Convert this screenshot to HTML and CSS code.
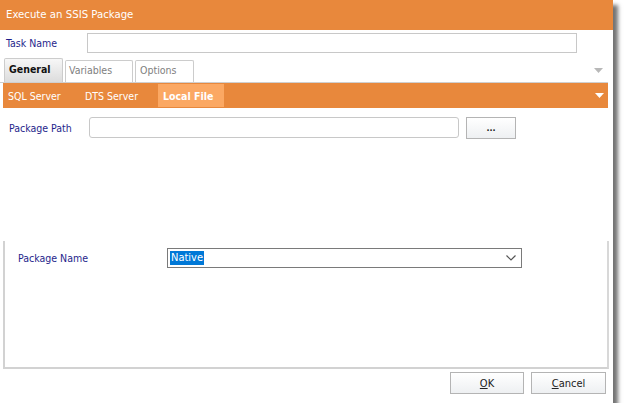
FILE: index.html
```html
<!DOCTYPE html>
<html lang="en-US">
<head>
	<title>Execute an SSIS Package</title>
	<meta charset="UTF-8">
	<link rel="stylesheet" href="styles.css">
</head>
<body>

<div class="window">
	<div class="titlebar">Execute an SSIS Package</div>

	<div class="taskrow">
		<label class="label tasklabel">Task Name</label>
		<div class="textbox taskbox"></div>
	</div>

	<div class="tabs">
		<div class="tab active">General</div>
		<div class="tab">Variables</div>
		<div class="tab">Options</div>
		<svg class="tabarrow" width="9" height="6" viewBox="0 0 9 6"><polygon points="0,0 9,0 4.5,5" fill="#b8b8b8"/></svg>
	</div>

	<div class="subbar">
		<div class="subitem sql">SQL Server</div>
		<div class="subitem dts">DTS Server</div>
		<div class="subitem current">Local File</div>
		<svg class="subarrow" width="9" height="6" viewBox="0 0 9 6"><polygon points="0,0 9,0 4.5,5" fill="#ffffff"/></svg>
	</div>

	<div class="pathrow">
		<label class="label pathlabel">Package Path</label>
		<div class="textbox pathbox"></div>
		<div class="button browse">...</div>
	</div>

	<div class="spacer"></div>

	<div class="panel">
		<div class="namerow">
			<label class="label namelabel">Package Name</label>
			<div class="combo">
				<span class="selected">Native</span>
				<svg class="chevron" width="10" height="6" viewBox="0 0 10 6"><polyline points="0.5,0.5 5,5 9.5,0.5" fill="none" stroke="#555" stroke-width="1.2"/></svg>
			</div>
		</div>
	</div>

	<div class="footer">
		<div class="button dlg"><u>O</u>K</div>
		<div class="button dlg"><u>C</u>ancel</div>
	</div>
</div>

</body>
</html>
```

FILE: styles.css
```css
body {
	margin: 0;
	background: white;
	font-family: "DejaVu Sans Condensed", "DejaVu Sans", sans-serif;
	font-size: 10.5px;
}

.window {
	width: 613px;
	height: 403px;
	background: white;
	box-shadow: 5px 5px 4px rgba(0, 0, 0, 0.55);
	display: flex;
	flex-direction: column;
}

.titlebar {
	height: 30px;
	flex: none;
	background: #e8883c;
	color: white;
	font-size: 11.3px;
	display: flex;
	align-items: center;
	padding-left: 6px;
	padding-bottom: 1px;
	box-sizing: border-box;
}

.label { color: #1f1f8c; }

.textbox {
	border: 1px solid #c8c8c8;
	background: white;
	box-sizing: border-box;
}

.taskrow {
	display: flex;
	align-items: center;
	height: 20px;
	margin-top: 3px;
	flex: none;
}
.tasklabel { width: 87px; padding-left: 6px; box-sizing: border-box; }
.taskbox { width: 490px; height: 20px; }

.tabs {
	display: flex;
	align-items: flex-end;
	height: 25px;
	margin-top: 5px;
	width: 608px;
	box-sizing: border-box;
	border-bottom: 1px solid #cfcfcf;
	padding-left: 4px;
	gap: 2px;
	flex: none;
	position: relative;
}
.tab {
	height: 22px;
	border: 1px solid #cccccc;
	border-bottom: none;
	border-radius: 2px 2px 0 0;
	background: white;
	color: #808080;
	box-sizing: border-box;
	padding-left: 3px;
	padding-top: 3px;
}
.tab:nth-child(2) { width: 68px; }
.tab:nth-child(3) { width: 59px; padding-left: 4px; }
.tab.active {
	height: 24px;
	width: 59px;
	background: linear-gradient(#f7f7f7, #dcdcdc);
	color: #111;
	font-weight: bold;
	padding-left: 4px;
	padding-top: 4px;
}
.tabarrow { position: absolute; right: 5px; top: 10px; }

.subbar {
	height: 25px;
	width: 605px;
	margin-left: 3px;
	background: #e8883c;
	display: flex;
	align-items: stretch;
	color: white;
	flex: none;
	position: relative;
}
.subitem { display: flex; align-items: center; padding-top: 1px; box-sizing: border-box; }
.sql { padding-left: 5px; width: 82px; }
.dts { width: 73px; }
.current {
	width: 66px;
	background: #fba863;
	font-weight: bold;
	padding-left: 5px;
	margin: 1px 0 1px;
}
.subarrow { position: absolute; right: 4px; top: 10px; }

.pathrow {
	display: flex;
	align-items: center;
	margin-top: 9px;
	height: 22px;
	flex: none;
}
.pathlabel { width: 89px; padding-left: 9px; box-sizing: border-box; }
.pathbox { width: 370px; height: 21px; border-radius: 3px; margin-top: -1px; }

.button {
	border: 1px solid #b4b4b4;
	background: linear-gradient(#ffffff, #eef0f2);
	color: #222;
	box-sizing: border-box;
	display: flex;
	align-items: center;
	justify-content: center;
}
.browse { width: 50px; height: 22px; margin-left: 7px; font-weight: bold; font-size: 9px; }

.spacer { height: 102px; flex: none; }

.panel {
	width: 606px;
	height: 128px;
	margin-left: 3px;
	border-left: 2px solid #d2d2d2;
	border-right: 2px solid #d8d8d8;
	border-bottom: 2px solid #d2d2d2;
	box-sizing: border-box;
	flex: none;
}
.namerow {
	display: flex;
	align-items: center;
	margin-top: 7px;
	height: 20px;
}
.namelabel { width: 162px; padding-left: 13px; box-sizing: border-box; }
.combo {
	width: 355px;
	height: 20px;
	border: 1px solid #7a7a7a;
	box-sizing: border-box;
	display: flex;
	align-items: center;
	justify-content: space-between;
	padding-left: 2px;
	padding-right: 5px;
}
.selected {
	background: #0078d7;
	color: white;
	font-size: 11px;
	line-height: 14px;
	padding: 0 1px;
}

.footer {
	display: flex;
	justify-content: flex-end;
	gap: 7px;
	padding-right: 7px;
	margin-top: 3px;
	flex: none;
}
.dlg { width: 75px; height: 22px; font-size: 11px; }
.dlg:first-child { width: 74px; }
```
